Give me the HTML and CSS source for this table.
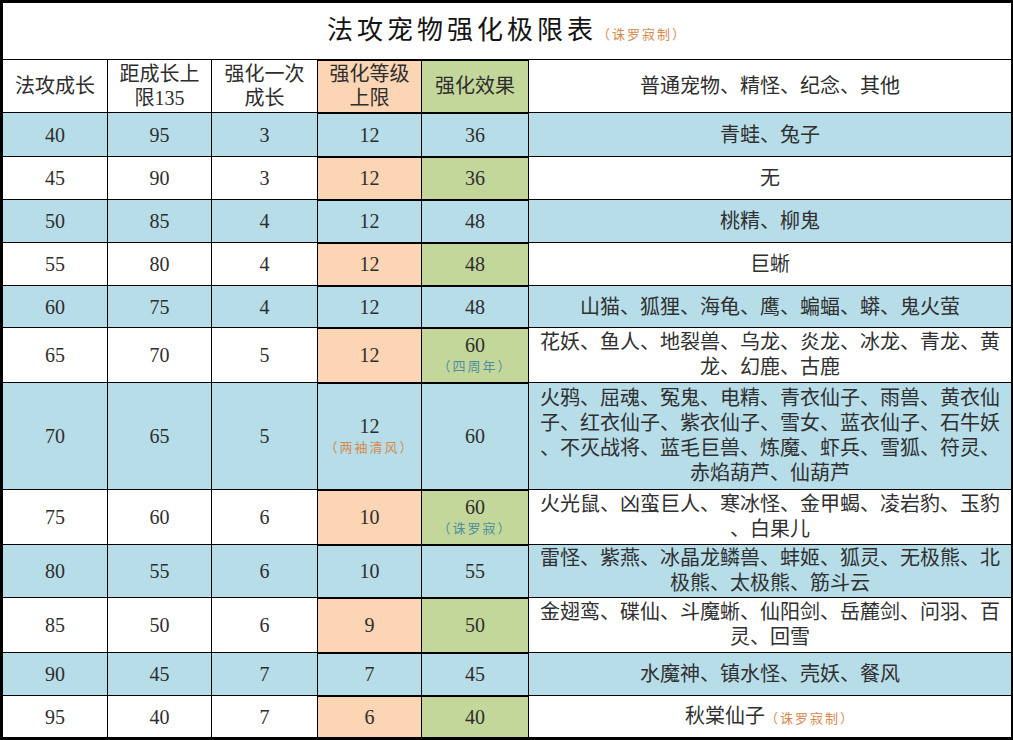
FILE: index.html
```html
<!DOCTYPE html>
<html lang="zh-CN">
<head>
<meta charset="utf-8">
<title>法攻宠物强化极限表</title>
<link rel="stylesheet" href="styles.css">
</head>
<body>
<table class="sheet">
  <colgroup>
    <col class="c1"><col class="c2"><col class="c3"><col class="c4"><col class="c5"><col class="c6">
  </colgroup>
  <tr class="r-title">
    <td colspan="6" class="title"><span class="title-main">法攻宠物强化极限表</span><span class="note orange title-note">（诛罗寂制）</span></td>
  </tr>
  <tr class="r-head">
    <td>法攻成长</td>
    <td><span class="hl">距成长上</span><span class="hl">限135</span></td>
    <td><span class="hl">强化一次</span><span class="hl">成长</span></td>
    <td class="lv"><span class="hl">强化等级</span><span class="hl">上限</span></td>
    <td class="fx">强化效果</td>
    <td>普通宠物、精怪、纪念、其他</td>
  </tr>
  <tr class="blue r44">
    <td>40</td><td>95</td><td>3</td><td class="lvb">12</td><td class="fxb">36</td><td class="pets">青蛙、兔子</td>
  </tr>
  <tr class="white r43">
    <td>45</td><td>90</td><td>3</td><td class="lv">12</td><td class="fx">36</td><td class="pets">无</td>
  </tr>
  <tr class="blue r43">
    <td>50</td><td>85</td><td>4</td><td class="lvb">12</td><td class="fxb">48</td><td class="pets">桃精、柳鬼</td>
  </tr>
  <tr class="white r43">
    <td>55</td><td>80</td><td>4</td><td class="lv">12</td><td class="fx">48</td><td class="pets">巨蜥</td>
  </tr>
  <tr class="blue r42">
    <td>60</td><td>75</td><td>4</td><td class="lvb">12</td><td class="fxb">48</td><td class="pets">山猫、狐狸、海龟、鹰、蝙蝠、蟒、鬼火萤</td>
  </tr>
  <tr class="white r55">
    <td>65</td><td>70</td><td>5</td><td class="lv">12</td>
    <td class="fx"><span class="num">60</span><span class="note teal">（四周年）</span></td>
    <td class="pets"><span class="ln">花妖、鱼人、地裂兽、乌龙、炎龙、冰龙、青龙、黄</span><span class="ln">龙、幻鹿、古鹿</span></td>
  </tr>
  <tr class="blue r107">
    <td>70</td><td>65</td><td>5</td>
    <td class="lvb"><span class="num">12</span><span class="note orange">（两袖清风）</span></td>
    <td class="fxb">60</td>
    <td class="pets"><span class="ln">火鸦、屈魂、冤鬼、电精、青衣仙子、雨兽、黄衣仙</span><span class="ln">子、红衣仙子、紫衣仙子、雪女、蓝衣仙子、石牛妖</span><span class="ln">、不灭战将、蓝毛巨兽、炼魔、虾兵、雪狐、符灵、</span><span class="ln">赤焰葫芦、仙葫芦</span></td>
  </tr>
  <tr class="white r55">
    <td>75</td><td>60</td><td>6</td><td class="lv">10</td>
    <td class="fx"><span class="num">60</span><span class="note teal">（诛罗寂）</span></td>
    <td class="pets"><span class="ln">火光鼠、凶蛮巨人、寒冰怪、金甲蝎、凌岩豹、玉豹</span><span class="ln">、白果儿</span></td>
  </tr>
  <tr class="blue r53">
    <td>80</td><td>55</td><td>6</td><td class="lvb">10</td><td class="fxb">55</td>
    <td class="pets"><span class="ln">雷怪、紫燕、冰晶龙鳞兽、蚌姬、狐灵、无极熊、北</span><span class="ln">极熊、太极熊、筋斗云</span></td>
  </tr>
  <tr class="white r55">
    <td>85</td><td>50</td><td>6</td><td class="lv">9</td><td class="fx">50</td>
    <td class="pets"><span class="ln">金翅鸾、碟仙、斗魔蜥、仙阳剑、岳麓剑、问羽、百</span><span class="ln">灵、回雪</span></td>
  </tr>
  <tr class="blue r43">
    <td>90</td><td>45</td><td>7</td><td class="lvb">7</td><td class="fxb">45</td><td class="pets">水魔神、镇水怪、壳妖、餐风</td>
  </tr>
  <tr class="white r43">
    <td>95</td><td>40</td><td>7</td><td class="lv">6</td><td class="fx">40</td>
    <td class="pets">秋棠仙子<span class="note orange inline-note">（诛罗寂制）</span></td>
  </tr>
</table>
</body>
</html>
```

FILE: styles.css
```css
html, body {
  margin: 0;
  padding: 0;
  background: #ffffff;
}

.sheet {
  border-collapse: collapse;
  table-layout: fixed;
  width: 1011px;
  border: 3px solid #000;
  font-family: "Liberation Serif", "Noto Sans CJK SC", serif;
  font-size: 20px;
  color: #2e2e2e;
}

.c1 { width: 106px; }
.c2 { width: 104px; }
.c3 { width: 106px; }
.c4 { width: 104px; }
.c5 { width: 107px; }
.c6 { width: 484px; }

.sheet td {
  border: 1px solid #000;
  padding: 0;
  text-align: center;
  vertical-align: middle;
  line-height: 24px;
}

.r-title { height: 58px; }
.r-head { height: 53px; }
.r44 { height: 44px; }
.r43 { height: 43px; }
.r42 { height: 42px; }
.r53 { height: 53px; }
.r55 { height: 55px; }
.r107 { height: 107px; }

.title {
  padding-top: 2px;
}

.title-main {
  font-family: "Noto Sans CJK SC", sans-serif;
  font-size: 26px;
  letter-spacing: 4px;
  color: #141414;
}

.title-note {
  font-size: 14px;
}

.blue td { background: #b7dde8; }
.white td { background: #ffffff; }

.sheet td.lv { background: #fcd5b4; }
.sheet td.fx { background: #c4d79b; }
.sheet td.lvb, .sheet td.fxb { background: #b7dde8; }

.sheet td.lv, .sheet td.fx, .sheet td.lvb, .sheet td.fxb {
  border-top-width: 2px;
  border-bottom-width: 2px;
}

.hl {
  display: block;
  height: 24px;
  line-height: 24px;
}

.pets {
  line-height: 25px;
  white-space: nowrap;
  font-family: "Liberation Serif", "Noto Sans CJK SC", sans-serif;
  color: #303030;
}

.ln {
  display: block;
  height: 25px;
  line-height: 25px;
}

.num {
  display: block;
  height: 23px;
  line-height: 23px;
}

.note {
  display: block;
  height: 20px;
  font-family: "Liberation Serif", "Noto Sans CJK SC", sans-serif;
  font-size: 13px;
  letter-spacing: 2px;
  line-height: 20px;
}

.title-note,
.inline-note {
  display: inline;
}

.teal { color: #4f8f9c; }
.orange { color: #d48a4e; }
```
